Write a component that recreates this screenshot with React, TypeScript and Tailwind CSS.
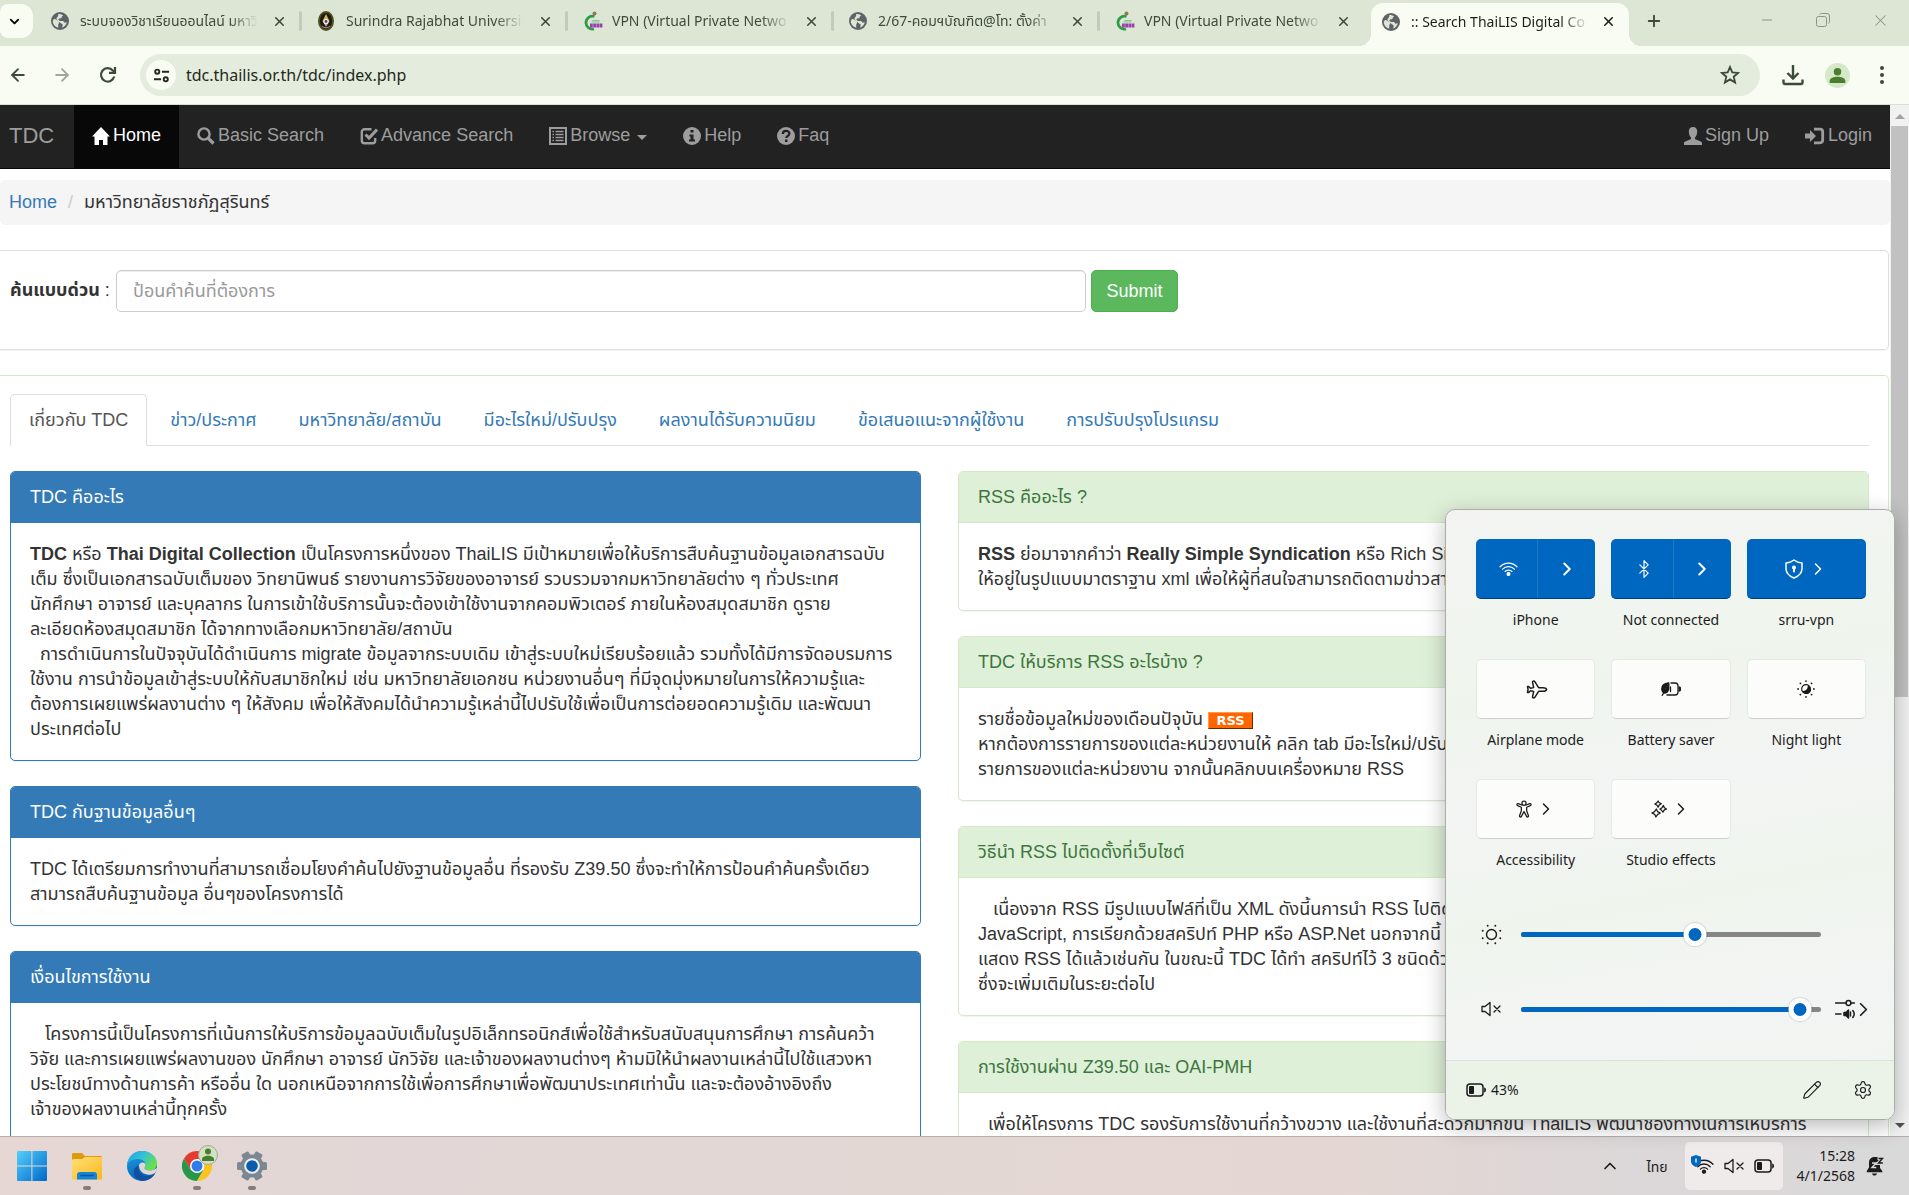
import React from "react";
import {
  ArrowLeft,
  ArrowRight,
  Bluetooth,
  ChevronDown,
  ChevronRight,
  ChevronUp,
  Minus,
  Pencil,
  Plane,
  Plus,
  Settings,
  X,
} from "lucide-react";

const pageFont = "font-['Liberation_Sans','Noto_Sans_Thai','Noto_Sans',sans-serif]";
const uiFont = "font-['Noto_Sans','Noto_Sans_Thai','Open_Sans',sans-serif]";

/* ---------- Browser chrome ---------- */

function GlobeIcon() {
  return (
    <svg viewBox="0 0 20 20" className="size-[18px] shrink-0" aria-hidden="true">
      <circle cx="10" cy="10" r="10" fill="#5f6368" />
      <path d="M3 8c2-.5 3 .5 4 1.500s2 .5 2 2-1 1.500-1 3v3C4.500 16.500 2 13.500 2 10z" fill="#dde6d5" />
      <path d="M8 2.200c2 0 4 .3 5.500 1.600L12 5l-.5 2H9.500L8 8.500 10 10h3.500l1.500 2 2.500-.5C17 14 15 16.800 12.500 17.500L13 14l-2-1.500-1.500-1L7 9.500 6 7l2-2.500z" fill="#dde6d5" />
    </svg>
  );
}

function SealIcon() {
  return (
    <svg viewBox="0 0 16 20" className="h-5 w-[18px] shrink-0" aria-hidden="true">
      <ellipse cx="8" cy="10" rx="8" ry="10" fill="#4a5220" />
      <ellipse cx="8" cy="10" rx="6" ry="8" fill="#22180f" />
      <path d="M8 3l3.500 7L8 16l-3.500-6z" fill="#c9b36a" />
      <circle cx="8" cy="10.500" r="2.600" fill="#f5f0dc" />
      <circle cx="8" cy="10.500" r="1.400" fill="#3b3f9a" />
      <path d="M4 15c2 2.500 6 2.500 8 0" stroke="#b07ab8" strokeWidth="1.200" fill="none" />
    </svg>
  );
}

function VpnIcon() {
  return (
    <svg viewBox="0 0 20 20" className="size-5 shrink-0" aria-hidden="true">
      <path d="M11.500 5.500A6.500 6.500 0 1 0 11 18" fill="none" stroke="#2e9e45" strokeWidth="2.800" />
      <circle cx="11.500" cy="2.500" r="2" fill="#9a7452" />
      <path d="M9.500 9.500h7M8.500 11h8" stroke="#7cc98b" strokeWidth="1" />
      <path d="M7 13.500h12.500M7 15.500h12.500" stroke="#9c3fae" strokeWidth="1.800" strokeDasharray="2.800 .4" />
    </svg>
  );
}

const browserTabs = [
  { icon: <GlobeIcon />, title: "ระบบจองวิชาเรียนออนไลน์ มหาวิ" },
  { icon: <SealIcon />, title: "Surindra Rajabhat Universit" },
  { icon: <VpnIcon />, title: "VPN (Virtual Private Netwo" },
  { icon: <GlobeIcon />, title: "2/67-คอมฯบัณฑิต@โท: ตั้งค่า" },
  { icon: <VpnIcon />, title: "VPN (Virtual Private Netwo" },
];

function TabTitle({ children }: { children: React.ReactNode }) {
  return (
    <span className="min-w-0 flex-1 text-left text-[14px] leading-6 whitespace-nowrap [mask-image:linear-gradient(to_right,black_84%,transparent)]">
      {children}
    </span>
  );
}

function TabStrip() {
  return (
    <header className={`flex h-[46px] shrink-0 bg-[#dde6d5] text-[#3f4a3c] ${uiFont}`}>
      <button aria-label="Search tabs" className="mt-1 grid h-[34px] w-[33px] shrink-0 place-items-center rounded-r-xl rounded-l-lg bg-[#f8fcf2] text-black">
        <ChevronDown className="mr-1 size-[15px]" strokeWidth={3} />
      </button>
      <div className="flex min-w-0" role="tablist">
        {browserTabs.map((t, i) => (
          <div key={i} className="flex h-[42px] w-[266px] min-w-0 items-center pl-[18px]">
            <span className="flex w-[18px] shrink-0">{t.icon}</span>
            <button role="tab" aria-selected="false" className="ml-[11px] flex w-[178px] min-w-0">
              <TabTitle>{t.title}</TabTitle>
            </button>
            <button aria-label="Close tab" className="ml-[14px]">
              <X className="size-[15px]" strokeWidth={2.5} />
            </button>
            <span className={i === 4 ? "hidden" : "-mr-[3px] ml-auto h-5 w-[3px] rounded bg-[#c3cabc]"} />
          </div>
        ))}
        <div className="relative mt-[3px] ml-[8px] flex h-[43px] w-[258px] min-w-0 items-center rounded-t-xl bg-[#f8fcf2] pb-[6px] pl-[11px] text-[#1b2119]">
          <span className="absolute bottom-0 -left-3 size-3 bg-[radial-gradient(circle_at_0_0,transparent_12px,#f8fcf2_12px)]" />
          <span className="absolute -right-3 bottom-0 size-3 bg-[radial-gradient(circle_at_100%_0,transparent_12px,#f8fcf2_12px)]" />
          <GlobeIcon />
          <button role="tab" aria-selected="true" className="ml-[11px] flex w-[178px] min-w-0">
            <TabTitle>:: Search ThaiLIS Digital Co</TabTitle>
          </button>
          <button aria-label="Close tab" className="ml-[12px]">
            <X className="size-[15px]" strokeWidth={2.5} />
          </button>
        </div>
      </div>
      <button aria-label="New tab" className="ml-[16px] flex h-[42px] items-center">
        <Plus className="size-[18px]" strokeWidth={2.5} />
      </button>
      <div className="mr-[19px] ml-auto flex h-10 items-center gap-10 text-[#8b9386]">
        <button aria-label="Minimize"><Minus className="size-4" strokeWidth={1.5} /></button>
        <button aria-label="Restore">
          <svg viewBox="0 0 16 16" className="size-4" fill="none" stroke="currentColor" aria-hidden="true">
            <rect x="1.500" y="4.500" width="10" height="10" rx="2" />
            <path d="M4.500 2.500C5 1.800 5.500 1.500 6.500 1.500H12a2.500 2.500 0 0 1 2.500 2.500v5.500c0 1-.3 1.500-1 2" />
          </svg>
        </button>
        <button aria-label="Close"><X className="size-[19px]" strokeWidth={1.3} /></button>
      </div>
    </header>
  );
}

function AddressBar() {
  return (
    <div className={`flex h-[59px] shrink-0 items-center border-b border-[#d9e0d3] bg-[#f8fcf2] text-[#3c4b37] ${uiFont}`}>
      <button aria-label="Back" className="ml-2"><ArrowLeft className="size-5" strokeWidth={2.2} /></button>
      <button aria-label="Forward" className="ml-6 text-[#a0a69c]"><ArrowRight className="size-5" strokeWidth={2.2} /></button>
      <button aria-label="Reload" className="ml-[26px]">
        <svg viewBox="0 0 20 20" className="size-5" fill="none" stroke="currentColor" strokeWidth="2.200" aria-hidden="true">
          <path d="M16.200 11.500A6.700 6.700 0 1 1 14.800 5.500L16.500 7" />
          <path d="M17 2v5.800h-6" />
        </svg>
      </button>
      <div className="ml-[22px] flex h-[42px] min-w-0 flex-1 items-center rounded-full bg-[#e4ecdd] pl-[6px]">
        <button aria-label="Site information" className="grid size-[30px] place-items-center rounded-full bg-[#f8fcf2] text-[#1f291c]">
          <svg viewBox="0 0 18 18" className="size-[17px]" fill="none" stroke="currentColor" strokeWidth="2" aria-hidden="true">
            <circle cx="4.500" cy="5" r="2.200" />
            <path d="M9.500 5H17M1 13h7.500" />
            <circle cx="13.500" cy="13" r="2.200" />
          </svg>
        </button>
        <input
          aria-label="Address"
          className="ml-[10px] min-w-0 flex-1 bg-transparent text-[16px] text-[#1f291c] outline-none"
          defaultValue="tdc.thailis.or.th/tdc/index.php"
        />
        <button aria-label="Bookmark" className="mr-5">
          <svg viewBox="0 0 20 20" className="size-5" fill="none" stroke="currentColor" strokeWidth="1.800" aria-hidden="true">
            <path d="M10 2l2.300 5.400 5.900.5-4.500 3.800 1.400 5.800L10 14.400l-5.100 3.100 1.400-5.800L1.800 7.900l5.900-.5z" />
          </svg>
        </button>
      </div>
      <button aria-label="Downloads" className="ml-[22px]">
        <svg viewBox="0 0 22 22" className="size-[22px]" fill="none" stroke="currentColor" strokeWidth="2.400" aria-hidden="true">
          <path d="M11 1v13M5.500 9l5.500 5.500L16.500 9" />
          <path d="M1.500 15.500v3.300c0 .8.500 1.200 1.200 1.200h16.600c.8 0 1.200-.5 1.200-1.200v-3.300" />
        </svg>
      </button>
      <button aria-label="Profile" className="ml-[21px]">
        <svg viewBox="0 0 24 24" className="size-[25px]" aria-hidden="true">
          <circle cx="12" cy="12" r="12" fill="#d5e8c8" />
          <circle cx="12" cy="8.500" r="3.600" fill="#4b7d2e" />
          <path d="M4.500 19.200v-2c0-2.800 4-4 7.500-4s7.500 1.200 7.500 4v2z" fill="#4b7d2e" />
        </svg>
      </button>
      <button aria-label="Menu" className="mr-[24px] ml-[29px]">
        <svg viewBox="0 0 6 20" className="h-5 w-[6px]" fill="currentColor" aria-hidden="true">
          <circle cx="3" cy="3" r="2" /><circle cx="3" cy="10" r="2" /><circle cx="3" cy="17" r="2" />
        </svg>
      </button>
    </div>
  );
}

/* ---------- Site navigation ---------- */

const glyph = "size-[18px] shrink-0";

const Glyphs = {
  home: (
    <svg viewBox="0 0 18 18" className={glyph} fill="currentColor" aria-hidden="true">
      <path d="M9 0l9 9.500h-2.500V18H11v-5H7v5H2.500V9.500H0z" />
    </svg>
  ),
  search: (
    <svg viewBox="0 0 18 18" className={glyph} fill="none" stroke="currentColor" aria-hidden="true">
      <circle cx="7" cy="7" r="5.600" strokeWidth="2.400" />
      <path d="M11 11l5.500 5.500" strokeWidth="3.200" />
    </svg>
  ),
  check: (
    <svg viewBox="0 0 18 18" className={glyph} fill="none" stroke="currentColor" aria-hidden="true">
      <path d="M11.500 2.200H4.500A2.700 2.700 0 0 0 1.800 5v8.500a2.700 2.700 0 0 0 2.700 2.700h8a2.700 2.700 0 0 0 2.700-2.700V11" strokeWidth="2.400" />
      <path d="M5.500 7.500l3.500 3.500 8-8.500" strokeWidth="3" />
    </svg>
  ),
  list: (
    <svg viewBox="0 0 18 18" className={glyph} fill="none" stroke="currentColor" aria-hidden="true">
      <rect x="1" y="1" width="16" height="16" strokeWidth="2" />
      <path d="M3.500 4.500h1.500M6.500 4.500h8M3.500 7.500h1.500M6.500 7.500h8M3.500 10.500h1.500M6.500 10.500h8M3.500 13.500h1.500M6.500 13.500h8" strokeWidth="1.700" />
    </svg>
  ),
  info: (
    <svg viewBox="0 0 18 18" className={glyph} aria-hidden="true">
      <circle cx="9" cy="9" r="9" fill="currentColor" />
      <path d="M7.500 3h3v2.500h-3zM6.500 7.500h4v5h1.500V14.500H6V12.500h1.500v-3h-1z" fill="#222" />
    </svg>
  ),
  question: (
    <svg viewBox="0 0 18 18" className={glyph} aria-hidden="true">
      <circle cx="9" cy="9" r="9" fill="currentColor" />
      <path d="M5.800 7c0-4 6.600-4 6.600-.5 0 2.300-3.100 2.300-3.100 4.500" fill="none" stroke="#222" strokeWidth="2.200" />
      <path d="M8 12.500h2.500V15H8z" fill="#222" />
    </svg>
  ),
  user: (
    <svg viewBox="0 0 18 18" className={glyph} fill="currentColor" aria-hidden="true">
      <path d="M9 0c2.800 0 4.200 1.800 4.200 4.500 0 2.500-.9 4.800-2.200 6v1.300c0 1 6.500 2.200 7 4V18H0v-2.200c.5-1.800 7-3 7-4v-1.300c-1.300-1.200-2.200-3.500-2.200-6C4.800 1.800 6.200 0 9 0z" />
    </svg>
  ),
  login: (
    <svg viewBox="0 0 20 18" className="h-[18px] w-5 shrink-0" aria-hidden="true">
      <path d="M0 6.500h5V3l6 6-6 6v-3.500H0z" fill="currentColor" />
      <path d="M9 2.200h6A2.700 2.700 0 0 1 17.700 4.900v8.200a2.700 2.700 0 0 1-2.700 2.700H9" fill="none" stroke="currentColor" strokeWidth="2.800" />
    </svg>
  ),
};

function NavLink({ icon, label, active, caret }: { icon: React.ReactNode; label: string; active?: boolean; caret?: boolean }) {
  return (
    <a
      href="#"
      aria-current={active ? "page" : undefined}
      className={`flex h-full items-center gap-[3px] px-[18px] pb-[2px] whitespace-nowrap ${active ? "bg-[#080808] text-white" : ""}`}
    >
      {icon}
      {label}
      {caret && <span className="mt-1 ml-1 border-x-[5px] border-t-[5px] border-x-transparent border-t-current" />}
    </a>
  );
}

function Navbar() {
  return (
    <nav className="mb-[11px] flex h-16 items-center border-b border-[#080808] bg-[#222] text-[18px] text-[#9d9d9d]">
      <a href="#" className="w-[74px] pb-[2px] pl-[9px] text-[22px]">TDC</a>
      <NavLink icon={Glyphs.home} label="Home" active />
      <NavLink icon={Glyphs.search} label="Basic Search" />
      <NavLink icon={Glyphs.check} label="Advance Search" />
      <NavLink icon={Glyphs.list} label="Browse" caret />
      <NavLink icon={Glyphs.info} label="Help" />
      <NavLink icon={Glyphs.question} label="Faq" />
      <div className="ml-auto flex h-full">
        <NavLink icon={Glyphs.user} label="Sign Up" />
        <NavLink icon={Glyphs.login} label="Login" />
      </div>
    </nav>
  );
}

/* ---------- Page content ---------- */

const contentTabs = [
  "เกี่ยวกับ TDC",
  "ข่าว/ประกาศ",
  "มหาวิทยาลัย/สถาบัน",
  "มีอะไรใหม่/ปรับปรุง",
  "ผลงานได้รับความนิยม",
  "ข้อเสนอแนะจากผู้ใช้งาน",
  "การปรับปรุงโปรแกรม",
];

function Panel({ title, lines, tone }: { title: string; lines: React.ReactNode[]; tone: "blue" | "green" }) {
  const frame = tone === "blue" ? "border-[#337ab7]" : "border-[#d6e9c6]";
  const head = tone === "blue" ? "bg-[#337ab7] border-[#337ab7] text-white" : "bg-[#dff0d8] border-[#d6e9c6] text-[#3c763d]";
  return (
    <section className={`min-w-0 overflow-hidden rounded-[5px] border bg-white shadow-[0_1px_1px_rgba(0,0,0,0.05)] ${frame}`}>
      <h3 className={`flex h-[51px] items-center border-b px-[19px] ${head}`}>{title}</h3>
      <div className="px-[19px] pt-[19px] pb-[18px]">
        {lines.map((line, i) => (
          <p key={i} className="h-[25px] whitespace-nowrap">{line}</p>
        ))}
      </div>
    </section>
  );
}

const leftPanels = [
  {
    title: "TDC คืออะไร",
    lines: [
      <><b>TDC</b> หรือ <b>Thai Digital Collection</b> เป็นโครงการหนึ่งของ ThaiLIS มีเป้าหมายเพื่อให้บริการสืบค้นฐานข้อมูลเอกสารฉบับ</>,
      "เต็ม ซึ่งเป็นเอกสารฉบับเต็มของ วิทยานิพนธ์ รายงานการวิจัยของอาจารย์ รวบรวมจากมหาวิทยาลัยต่าง ๆ ทั่วประเทศ",
      "นักศึกษา อาจารย์ และบุคลากร ในการเข้าใช้บริการนั้นจะต้องเข้าใช้งานจากคอมพิวเตอร์ ภายในห้องสมุดสมาชิก ดูราย",
      "ละเอียดห้องสมุดสมาชิก ได้จากทางเลือกมหาวิทยาลัย/สถาบัน",
      "\u00a0\u00a0การดำเนินการในปัจจุบันได้ดำเนินการ migrate ข้อมูลจากระบบเดิม เข้าสู่ระบบใหม่เรียบร้อยแล้ว รวมทั้งได้มีการจัดอบรมการ",
      "ใช้งาน การนำข้อมูลเข้าสู่ระบบให้กับสมาชิกใหม่ เช่น มหาวิทยาลัยเอกชน หน่วยงานอื่นๆ ที่มีจุดมุ่งหมายในการให้ความรู้และ",
      "ต้องการเผยแพร่ผลงานต่าง ๆ ให้สังคม เพื่อให้สังคมได้นำความรู้เหล่านี้ไปปรับใช้เพื่อเป็นการต่อยอดความรู้เดิม และพัฒนา",
      "ประเทศต่อไป",
    ],
  },
  {
    title: "TDC กับฐานข้อมูลอื่นๆ",
    lines: [
      "TDC ได้เตรียมการทำงานที่สามารถเชื่อมโยงคำค้นไปยังฐานข้อมูลอื่น ที่รองรับ Z39.50 ซึ่งจะทำให้การป้อนคำค้นครั้งเดียว",
      "สามารถสืบค้นฐานข้อมูล อื่นๆของโครงการได้",
    ],
  },
  {
    title: "เงื่อนไขการใช้งาน",
    lines: [
      "\u00a0\u00a0\u00a0โครงการนี้เป็นโครงการที่เน้นการให้บริการข้อมูลฉบับเต็มในรูปอิเล็กทรอนิกส์เพื่อใช้สำหรับสนับสนุนการศึกษา การค้นคว้า",
      "วิจัย และการเผยแพร่ผลงานของ นักศึกษา อาจารย์ นักวิจัย และเจ้าของผลงานต่างๆ ห้ามมิให้นำผลงานเหล่านี้ไปใช้แสวงหา",
      "ประโยชน์ทางด้านการค้า หรืออื่น ใด นอกเหนือจากการใช้เพื่อการศึกษาเพื่อพัฒนาประเทศเท่านั้น และจะต้องอ้างอิงถึง",
      "เจ้าของผลงานเหล่านี้ทุกครั้ง",
    ],
  },
];

const rssBadge = (
  <a href="#" className="inline-block h-[17px] w-[45px] border border-t-[#ff9a55] border-r-[#6b2a00] border-b-[#6b2a00] border-l-[#ff9a55] bg-[#ff6600] text-center align-middle font-['DejaVu_Sans',sans-serif] text-[13px] leading-[15px] font-bold text-white">
    RSS
  </a>
);

const rightPanels = [
  {
    title: "RSS คืออะไร ?",
    lines: [
      <><b>RSS</b> ย่อมาจากคำว่า <b>Really Simple Syndication</b> หรือ Rich Site Summary คือ</>,
      "ให้อยู่ในรูปแบบมาตราฐาน xml เพื่อให้ผู้ที่สนใจสามารถติดตามข่าวสารได้",
    ],
  },
  {
    title: "TDC ให้บริการ RSS อะไรบ้าง ?",
    lines: [
      <>รายชื่อข้อมูลใหม่ของเดือนปัจุบัน {rssBadge}</>,
      "หากต้องการรายการของแต่ละหน่วยงานให้ คลิก tab มีอะไรใหม่/ปรับปรุง",
      "รายการของแต่ละหน่วยงาน จากนั้นคลิกบนเครื่องหมาย RSS",
    ],
  },
  {
    title: "วิธีนำ RSS ไปติดตั้งที่เว็บไซต์",
    lines: [
      "\u00a0\u00a0\u00a0เนื่องจาก RSS มีรูปแบบไฟล์ที่เป็น XML ดังนี้นการนำ RSS ไปติดตั้ง",
      "JavaScript, การเรียกด้วยสคริปท์ PHP หรือ ASP.Net นอกจากนี้ โปรแกรม",
      "แสดง RSS ได้แล้วเช่นกัน ในขณะนี้ TDC ได้ทำ สคริปท์ไว้ 3 ชนิดด้วยกัน",
      "ซึ่งจะเพิ่มเติมในระยะต่อไป",
    ],
  },
  {
    title: "การใช้งานผ่าน Z39.50 และ OAI-PMH",
    lines: [
      "\u00a0\u00a0เพื่อให้โครงการ TDC รองรับการใช้งานที่กว้างขวาง และใช้งานที่สะดวกมากขึ้น ThaiLIS พัฒนาช่องทางในการให้บริการ",
    ],
  },
];

function SitePage() {
  return (
    <div className={`min-w-0 flex-1 overflow-hidden bg-white text-[18px] leading-[25px] text-[#333] ${pageFont}`}>
      <Navbar />
      <ol className="mb-[25px] flex h-[45px] items-center rounded-[5px] bg-[#f5f5f5] pl-[9px]">
        <li><a href="#" className="text-[#337ab7]">Home</a></li>
        <li aria-hidden="true" className="px-[11px] text-[#ccc]">/</li>
        <li>มหาวิทยาลัยราชภัฏสุรินทร์</li>
      </ol>

      <form className="mr-px mb-[25px] flex h-[100px] rounded-r-[5px] border border-l-0 border-[#ddd] pt-[19px] pl-[10px] shadow-[0_1px_1px_rgba(0,0,0,0.05)]" onSubmit={(e) => e.preventDefault()}>
        <label htmlFor="quick" className="w-[106px] leading-[40px] whitespace-nowrap">
          <b>ค้นแบบด่วน</b> :
        </label>
        <input
          id="quick"
          placeholder="ป้อนคำค้นที่ต้องการ"
          className="h-[42px] w-[970px] min-w-0 rounded-[5px] border border-[#ccc] px-4 shadow-[inset_0_1px_1px_rgba(0,0,0,0.075)] placeholder:text-[#999]"
        />
        <button type="submit" className="ml-[5px] h-[42px] w-[87px] rounded-[5px] border border-[#4cae4c] bg-[#5cb85c] text-white">
          Submit
        </button>
      </form>

      <div className="mr-px rounded-r-[5px] border border-l-0 border-[#d6e9c6] pt-[18px] pr-[19px] pl-[10px]">
        <div role="tablist" className="mb-[25px] flex h-[52px] border-b border-[#ddd]">
          {contentTabs.map((t, i) => (
            <button
              key={t}
              role="tab"
              aria-selected={i === 0}
              className={`mr-1 h-[52px] rounded-t-[5px] border px-[18px] whitespace-nowrap ${
                i === 0 ? "border-[#ddd] border-b-white bg-white text-[#555]" : "border-transparent text-[#337ab7]"
              }`}
            >
              {t}
            </button>
          ))}
        </div>
        <div className="grid grid-cols-2 items-start gap-[37px]">
          <div className="flex min-w-0 flex-col gap-[25px]">
            {leftPanels.map((p) => <Panel key={p.title} tone="blue" {...p} />)}
          </div>
          <div className="flex min-w-0 flex-col gap-[25px]">
            {rightPanels.map((p) => <Panel key={p.title} tone="green" {...p} />)}
          </div>
        </div>
      </div>
    </div>
  );
}

function Scrollbar() {
  return (
    <div className="flex w-[19px] shrink-0 flex-col items-center bg-[#f1f1f1]">
      <span className="mt-[9px] border-x-[5px] border-b-[5px] border-x-transparent border-b-[#a3a3a3]" />
      <span className="mt-[7px] h-[571px] w-[17px] bg-[#c1c1c1]" />
      <span className="mt-auto mb-[8px] border-x-[5px] border-t-[5px] border-x-transparent border-t-[#505050]" />
    </div>
  );
}

/* ---------- Quick settings ---------- */

function WifiIcon({ className }: { className: string }) {
  return (
    <svg viewBox="0 0 20 16" className={className} fill="none" stroke="currentColor" strokeWidth="1.300" strokeLinecap="round" aria-hidden="true">
      <path d="M1 5.800a12 12 0 0 1 18 0M3.800 8.200a8.500 8.500 0 0 1 12.400 0M6.400 10.600a5 5 0 0 1 7.200 0" />
      <circle cx="10" cy="13.200" r="1.500" fill="currentColor" />
    </svg>
  );
}

function MuteIcon() {
  return (
    <svg viewBox="0 0 20 16" className="h-4 w-5" fill="none" stroke="currentColor" strokeWidth="1.300" strokeLinejoin="round" strokeLinecap="round" aria-hidden="true">
      <path d="M1 5.500v5h3l5 4V1.500l-5 4zM13 5l6 6M19 5l-6 6" />
    </svg>
  );
}

function BatteryIcon() {
  return (
    <svg viewBox="0 0 20 14" className="h-[14px] w-5" aria-hidden="true">
      <rect x="1" y="1" width="16" height="12" rx="3" fill="none" stroke="currentColor" strokeWidth="1.500" />
      <path d="M18.200 4.500c1.200.3 1.800 1.200 1.800 2.500s-.6 2.200-1.800 2.500z" fill="currentColor" />
      <rect x="3" y="3" width="5" height="8" rx="1" fill="currentColor" />
    </svg>
  );
}

const stroke = { fill: "none", stroke: "currentColor", strokeWidth: 1.3, strokeLinejoin: "round", strokeLinecap: "round" } as const;

const ShieldIcon = (
  <svg viewBox="0 0 20 20" className="size-5" {...stroke} strokeWidth={1.5} aria-hidden="true">
    <path d="M10 1c2.500 2 5 2.800 8 3v5.500c0 4.500-3 7.500-8 9.500-5-2-8-5-8-9.500V4c3-.2 5.500-1 8-3z" />
    <circle cx="10" cy="8.500" r="1.300" fill="currentColor" />
    <path d="M10 9v3.500" strokeWidth="2" />
  </svg>
);

const BatterySaverIcon = (
  <svg viewBox="0 0 20 14" className="h-[14px] w-5" {...stroke} aria-hidden="true">
    <path d="M10 1h4a3 3 0 0 1 3 3v6a3 3 0 0 1-3 3H6" />
    <path d="M18.200 5c1 .2 1.500 1 1.500 2s-.5 1.800-1.500 2z" fill="currentColor" />
    <path d="M7.500 1C3.500 1.500.800 3.500.800 7c0 1.500.5 2.500 1.200 3.200L6.500 6 3 10.500 1.200 13.300M3 11c3 .5 4.800-2 4.800-5V1z" fill="currentColor" />
    <path d="M9.500 5v4.500" />
  </svg>
);

const NightIcon = (
  <svg viewBox="0 0 20 20" className="size-[18px]" aria-hidden="true">
    <circle cx="10" cy="10" r="4.800" fill="none" stroke="currentColor" strokeWidth="1.300" />
    <path d="M12 5.800a5 5 0 1 1-6.200 6.200c3.700.8 6.500-2 6.200-6.200z" fill="currentColor" />
    <g fill="currentColor">
      <circle cx="10" cy="1.200" r="1" /><circle cx="10" cy="18.800" r="1" /><circle cx="1.200" cy="10" r="1" /><circle cx="18.800" cy="10" r="1" />
      <circle cx="3.800" cy="3.800" r="1" /><circle cx="16.200" cy="3.800" r="1" /><circle cx="3.800" cy="16.200" r="1" /><circle cx="16.200" cy="16.200" r="1" />
    </g>
  </svg>
);

const AccessibilityIcon = (
  <svg viewBox="0 0 18 20" className="h-[18px] w-4" {...stroke} strokeWidth={1.4} aria-hidden="true">
    <circle cx="9" cy="3.500" r="2.300" />
    <path d="M6.500 5.500L2.500 4C1 3.500.500 5.500 1.800 6.200L6 8v4l-2 5.500c-.4 1.500 1.500 2 2.100.8L9 13l2.900 5.300c.6 1.200 2.500.7 2.100-.8L12 12V8l4.200-1.800c1.300-.7.800-2.700-.7-2.200l-4 1.500" />
  </svg>
);

const StudioIcon = (
  <svg viewBox="0 0 18 20" className="h-[18px] w-4" {...stroke} strokeWidth={1.4} aria-hidden="true">
    <path d="M8 1l1.200 2L11.500 4 9.200 5.500 8 8 6.500 5.500 4.500 4.500 6.500 3zM14 6l1 2.500L17.500 10 15 11l-1.500 2.500L12 11.500 10 10l2.500-1.500zM6 10l1.500 3L10.500 14.500 7.500 16 5.500 19 4.200 16 1 14.500 4 13z" />
  </svg>
);

const SunIcon = (
  <svg viewBox="0 0 22 22" className="size-[21px]" aria-hidden="true">
    <circle cx="11" cy="11" r="5.200" fill="none" stroke="currentColor" strokeWidth="1.500" />
    <g fill="currentColor">
      <circle cx="7" cy="1.800" r="1" /><circle cx="15" cy="1.800" r="1" /><circle cx="7" cy="20.200" r="1" /><circle cx="15" cy="20.200" r="1" />
      <circle cx="1.800" cy="7" r="1" /><circle cx="1.800" cy="15" r="1" /><circle cx="20.200" cy="7" r="1" /><circle cx="20.200" cy="15" r="1" />
    </g>
  </svg>
);

const tileOn = "h-[60px] rounded-[5px] border-b border-[#003e73] bg-[#0067c0] text-white";
const tileOff = "h-[60px] rounded-[5px] border border-[#e6e8e5] border-b-[#cccfcb] bg-[#fcfdfb] text-[#1b1b1b]";

function SplitTile({ icon, label }: { icon: React.ReactNode; label: string }) {
  return (
    <div>
      <div className={`flex ${tileOn}`}>
        <button aria-label={label} className="grid flex-1 place-items-center border-r border-[#1f78c7] pl-1">{icon}</button>
        <button aria-label={`${label} options`} className="grid flex-1 place-items-center">
          <ChevronRight className="size-[22px]" strokeWidth={2.2} />
        </button>
      </div>
      <TileLabel>{label}</TileLabel>
    </div>
  );
}

function Tile({ icon, label, on, more }: { icon: React.ReactNode; label: string; on?: boolean; more?: boolean }) {
  return (
    <div>
      <button aria-label={label} className={`flex w-full items-center justify-center gap-1 ${on ? tileOn : tileOff}`}>
        {icon}
        {more && <ChevronRight className="size-5" strokeWidth={1.8} />}
      </button>
      <TileLabel>{label}</TileLabel>
    </div>
  );
}

function TileLabel({ children }: { children: React.ReactNode }) {
  return <div className="mt-[11px] -mx-2 text-center text-[14px] leading-5 whitespace-nowrap">{children}</div>;
}

function Slider({ label, value }: { label: string; value: number }) {
  return (
    <div className="relative flex h-6 w-[300px] items-center">
      <div className="h-[5px] w-full overflow-hidden rounded-full bg-[#868686]">
        <div className="h-full bg-[#0067c0]" style={{ width: `${value}%` }} />
      </div>
      <span
        className="absolute size-[23px] -translate-x-1/2 rounded-full border-[5px] border-white bg-[#0067c0] shadow-[0_0_1px_1px_rgba(0,0,0,0.12)]"
        style={{ left: `${value}%` }}
      />
      <input type="range" aria-label={label} defaultValue={value} className="absolute inset-0 w-full opacity-0" />
    </div>
  );
}

function QuickSettings() {
  return (
    <aside className={`absolute right-[14px] bottom-[75px] w-[450px] overflow-hidden rounded-[10px] border border-[#a9ada8] bg-[linear-gradient(170deg,#f3f4f2,#eff5ed_30%,#f3f4f4_45%,#eff5ed_62%,#f3f4f4_80%,#eff5ee)] text-[#1b1b1b] shadow-[0_6px_22px_rgba(0,0,0,0.28)] ${uiFont}`}>
      <div className="grid grid-cols-3 gap-x-4 gap-y-[29px] pt-[29px] pr-[28px] pl-[30px]">
        <SplitTile icon={<WifiIcon className="h-[16px] w-[19px]" />} label="iPhone" />
        <SplitTile icon={<Bluetooth className="size-5" strokeWidth={1.4} />} label="Not connected" />
        <Tile icon={ShieldIcon} label="srru-vpn" on more />
        <Tile icon={<Plane className="size-[21px] rotate-45" strokeWidth={1.7} />} label="Airplane mode" />
        <Tile icon={BatterySaverIcon} label="Battery saver" />
        <Tile icon={NightIcon} label="Night light" />
        <Tile icon={AccessibilityIcon} label="Accessibility" more />
        <Tile icon={StudioIcon} label="Studio effects" more />
      </div>
      <div className="mt-[52px] flex items-center pl-[35px]">
        <span className="w-[40px]">{SunIcon}</span>
        <Slider label="Brightness" value={58} />
      </div>
      <div className="mt-[51px] flex items-center pl-[35px]">
        <button aria-label="Unmute" className="w-[40px]"><MuteIcon /></button>
        <Slider label="Volume" value={93} />
        <button aria-label="Sound output" className="ml-[14px] flex items-center">
          <svg viewBox="0 0 20 20" className="size-5" {...stroke} strokeWidth={1.5} aria-hidden="true">
            <path d="M.5 4H11M16 4h3.500M.5 15H6" />
            <circle cx="13.500" cy="4" r="2.400" />
            <path d="M9 13.500v3h2l2.500 2.500V11L11 13.500z" fill="currentColor" />
            <path d="M15.500 13v4M17.800 11.500c1.600 2 1.600 5 0 7" />
          </svg>
          <ChevronRight className="-ml-[3px] size-[23px]" strokeWidth={1.8} />
        </button>
      </div>
      <footer className="mt-[39px] flex h-[59px] items-center border-t border-[#dbe2da] bg-[#ebf3e9] pr-[21px] pb-px pl-5">
        <button className="flex items-center gap-[5px] text-[14px]"><BatteryIcon />43%</button>
        <button aria-label="Edit" className="ml-auto"><Pencil className="size-5" strokeWidth={1.4} /></button>
        <button aria-label="Settings" className="ml-[31px]"><Settings className="size-5" strokeWidth={1.4} /></button>
      </footer>
    </aside>
  );
}

/* ---------- Taskbar ---------- */

const WindowsLogo = (
  <svg viewBox="0 0 30 30" className="size-[30px]" aria-hidden="true">
    <defs>
      <linearGradient id="win" x1="0" y1="0" x2="1" y2="1"><stop offset="0" stopColor="#53d1fb" /><stop offset="1" stopColor="#0067c8" /></linearGradient>
    </defs>
    <path d="M0 1a1 1 0 0 1 1-1h13.400v14.400H0zM15.400 0H29a1 1 0 0 1 1 1v13.400H15.400zM0 15.400h14.400V30H1a1 1 0 0 1-1-1zM15.400 15.400H30V29a1 1 0 0 1-1 1H15.400z" fill="url(#win)" />
  </svg>
);

const ExplorerLogo = (
  <svg viewBox="0 0 30 30" className="size-[30px]" aria-hidden="true">
    <defs>
      <linearGradient id="fold" x1="0" y1="0" x2="1" y2="1"><stop offset="0" stopColor="#ffe07a" /><stop offset="1" stopColor="#fbb81c" /></linearGradient>
    </defs>
    <path d="M0 3.500A1.500 1.500 0 0 1 1.500 2H10l3 3h15.500A1.500 1.500 0 0 1 30 6.500V12H0z" fill="#dc9a0c" />
    <path d="M0 9.500A1.500 1.500 0 0 1 1.500 8H10l3-2h17v22.500H0z" fill="url(#fold)" />
    <path d="M5 28.500V24a3 3 0 0 1 3-3h14a3 3 0 0 1 3 3v4.500z" fill="#1683d8" />
    <path d="M9 24.500h12" stroke="#0a5a9c" strokeWidth="1.500" strokeLinecap="round" />
  </svg>
);

const EdgeLogo = (
  <svg viewBox="0 0 30 30" className="size-[30px]" aria-hidden="true">
    <defs>
      <linearGradient id="eg1" x1="0" y1="0" x2="1" y2=".6"><stop offset="0" stopColor="#1f9ee2" /><stop offset=".5" stopColor="#35c1d8" /><stop offset="1" stopColor="#6be146" /></linearGradient>
      <linearGradient id="eg2" x1="0" y1="0" x2=".3" y2="1"><stop offset="0" stopColor="#1ba2e6" /><stop offset="1" stopColor="#0a62b8" /></linearGradient>
    </defs>
    <circle cx="15" cy="15" r="15" fill="url(#eg2)" />
    <path d="M0 14C1 5.500 7.500 0 15 0c8.500 0 15 5.500 15 12.500 0 4.500-3.500 7-7 7-3.500 0-5.500-1.300-5.500-2.500 0-.8 1-1.200 1-3.200 0-3-3-5.800-7.500-5.800C5.500 8 1.500 10.500 0 14z" fill="url(#eg1)" />
    <path d="M11.500 14.500c-1 7.500 5 11.500 10.500 10.500 2-.3 4-1.300 5.700-2C25.500 27 20.500 30 15.500 30 9 29 6 24 7 19.500c.5-2.500 2.500-4.500 4.500-5z" fill="#124f9e" />
    <path d="M12 14.500c0-1.500 1.500-3 3.500-3 1.800 0 3 1 3 2.500s-1 2.200-1 3c0 1.200 2 2.500 5.500 2.500 2.500 0 4.500-1 7-2.700-.3 2.800-1.500 5-3 5.700-1.500 1-4 1.500-6 1.200-5-.5-9-4-9-9.200z" fill="#e3d7d5" />
  </svg>
);

const ChromeLogo = (
  <svg viewBox="0 0 36 36" className="size-9" aria-hidden="true">
    <path d="M15 6a15 15 0 0 0-13 7.500L8.500 24.700 15 14h13a15 15 0 0 0-13-8z" fill="#e33b2e" />
    <path d="M2 13.500A15 15 0 0 0 15 36l6.500-11.300L15 28l-6.500-3.500z" fill="#279847" />
    <path d="M28 13.500A15 15 0 0 1 15 36l7-11.500V14z" fill="#fcc31e" />
    <circle cx="15" cy="21" r="7" fill="#fff" />
    <circle cx="15" cy="21" r="5.500" fill="#2f7bea" />
    <circle cx="26" cy="10" r="9.500" fill="#d0e2c2" stroke="#a2aa99" />
    <circle cx="26" cy="6.500" r="3" fill="#4b7d2e" />
    <path d="M20 16v-1.500c0-5 12-5 12 0V16z" fill="#4b7d2e" />
  </svg>
);

const SettingsLogo = (
  <svg viewBox="0 0 30 30" className="size-[30px]" aria-hidden="true">
    <g fill="#7b8791">
      <circle cx="15" cy="15" r="11.500" />
      <rect x="11" y="0" width="8" height="30" rx="1.500" transform="rotate(30 15 15)" />
      <rect x="11" y="0" width="8" height="30" rx="1.500" transform="rotate(90 15 15)" />
      <rect x="11" y="0" width="8" height="30" rx="1.500" transform="rotate(150 15 15)" />
    </g>
    <circle cx="15" cy="15" r="7.800" fill="#eceff1" />
    <circle cx="15" cy="15" r="5.800" fill="#0c5cab" />
  </svg>
);

const apps = [
  { name: "Start", icon: WindowsLogo, running: false },
  { name: "File Explorer", icon: ExplorerLogo, running: true },
  { name: "Microsoft Edge", icon: EdgeLogo, running: false },
  { name: "Google Chrome", icon: ChromeLogo, running: true },
  { name: "Settings", icon: SettingsLogo, running: true },
];

function Taskbar() {
  return (
    <footer className={`flex h-[59px] shrink-0 items-center border-t border-[#b5acab] bg-[linear-gradient(90deg,#e6d7d4,#e2d7d6_20%,#e4d7d3_70%,#dcd7d8_85%,#d9d9da)] text-[#1b1b1b] ${uiFont}`}>
      <div className="ml-1 flex">
        {apps.map((a) => (
          <button key={a.name} aria-label={a.name} className="relative flex h-[58px] w-[55px] items-center justify-center">
            <span className="grid size-[30px] place-items-start [&>svg]:max-w-none [&>svg.size-9]:-mt-[6px]">{a.icon}</span>
            {a.running && <span className="absolute bottom-[5px] h-1 w-2 rounded-full bg-[#857c7b]" />}
          </button>
        ))}
      </div>
      <button aria-label="Show hidden icons" className="ml-auto"><ChevronUp className="size-5" strokeWidth={2} /></button>
      <button className="ml-[26px] text-[14px]">ไทย</button>
      <button aria-label="Network, volume, battery" className="ml-[17px] flex h-12 w-[98px] items-center justify-center gap-[10px] rounded-[5px] bg-[#efebeb]">
        <span className="relative">
          <WifiIcon className="ml-[1px] h-[17px] w-[20px]" />
          <svg viewBox="0 0 10 12" className="absolute -top-[3px] -left-[2px] h-3 w-[10px]" aria-hidden="true">
            <path d="M5 0l5 1.800v4.500C10 9 8 11 5 12 2 11 0 9 0 6.300V1.800z" fill="#0067c0" />
            <path d="M5 3.500v4" stroke="#fff" strokeWidth="1.300" />
          </svg>
        </span>
        <MuteIcon />
        <BatteryIcon />
      </button>
      <div className="ml-[14px] text-right text-[14px] leading-5">
        <div>15:28</div>
        <div>4/1/2568</div>
      </div>
      <button aria-label="Notifications" className="mr-[25px] ml-[11px]">
        <svg viewBox="0 0 18 20" className="h-5 w-[18px]" aria-hidden="true">
          <path d="M8.500 1C5 1 3 3.500 3 7v4.500L.8 15v1.200h15.500V15L14 12V9" fill="currentColor" />
          <path d="M8.500 1H14v11H8z" fill="currentColor" />
          <path d="M6 17.500h5c-.5 1.500-1.200 2-2.500 2s-2-.5-2.500-2z" fill="currentColor" />
          <path d="M6 7h4l-4 4.500h4.300" fill="none" stroke="#dad8d9" strokeWidth="1.400" />
          <path d="M11.500 2.500h5l-5 5h5" fill="none" stroke="#dad8d9" strokeWidth="3" />
          <path d="M12.500 2.500h4l-4 4.500h4.300" fill="none" stroke="currentColor" strokeWidth="1.400" />
        </svg>
      </button>
    </footer>
  );
}

export default function App() {
  return (
    <div className="relative flex h-screen flex-col overflow-hidden">
      <TabStrip />
      <AddressBar />
      <main className="flex min-h-0 flex-1">
        <SitePage />
        <Scrollbar />
      </main>
      <Taskbar />
      <QuickSettings />
    </div>
  );
}
